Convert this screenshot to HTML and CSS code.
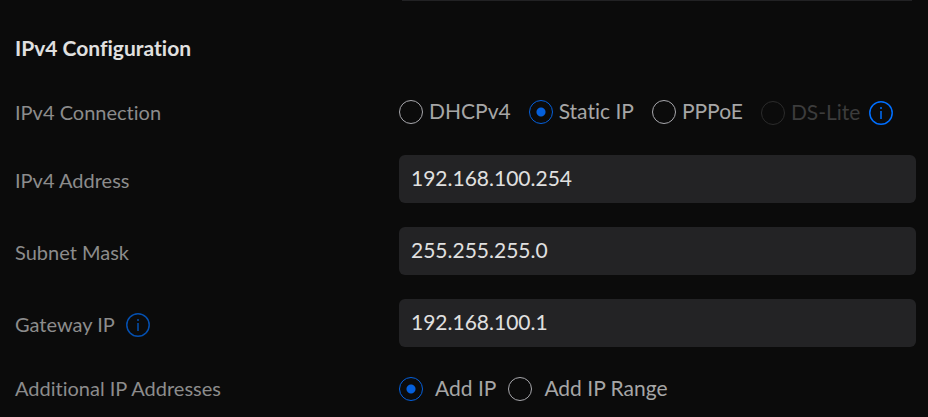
FILE: index.html
```html
<!DOCTYPE html>
<html lang="en">
<head>
    <meta charset="UTF-8">
    <meta name="viewport" content="width=device-width, initial-scale=1.0">
    <title>IPv4 Configuration</title>
    <link rel="stylesheet" href="styles.css">
</head>
<body>
    <form class="settings">
        <div class="previous-field"></div>
        <h2>IPv4 Configuration</h2>

        <div class="row" role="radiogroup" aria-labelledby="connectionLabel">
            <span class="label" id="connectionLabel">IPv4 Connection</span>
            <div class="options">
                <label class="option"><input type="radio" name="connection" value="dhcp"><span>DHCPv4</span></label>
                <label class="option"><input type="radio" name="connection" value="static" checked><span>Static IP</span></label>
                <label class="option"><input type="radio" name="connection" value="pppoe"><span>PPPoE</span></label>
                <div class="option-info">
                    <label class="option disabled"><input type="radio" name="connection" value="dslite" disabled><span>DS-Lite</span></label>
                    <svg class="info" viewBox="0 0 24 24" aria-hidden="true">
                        <circle cx="12" cy="12" r="11.2"/>
                        <path d="M12 10v8"/>
                        <path d="M12 6v2"/>
                    </svg>
                </div>
            </div>
        </div>

        <div class="row field-row">
            <label class="label" for="address">IPv4 Address</label>
            <input class="field" type="text" id="address" name="address" value="192.168.100.254">
        </div>

        <div class="row field-row">
            <label class="label" for="subnet">Subnet Mask</label>
            <input class="field" type="text" id="subnet" name="subnet" value="255.255.255.0">
        </div>

        <div class="row field-row">
            <div class="label">
                <label for="gateway">Gateway IP</label>
                <svg class="info dim" viewBox="0 0 24 24" aria-hidden="true">
                    <circle cx="12" cy="12" r="11.2"/>
                    <path d="M12 10v8"/>
                    <path d="M12 6v2"/>
                </svg>
            </div>
            <input class="field" type="text" id="gateway" name="gateway" value="192.168.100.1">
        </div>

        <div class="row" role="radiogroup" aria-labelledby="additionalLabel">
            <span class="label" id="additionalLabel">Additional IP Addresses</span>
            <div class="options compact">
                <label class="option"><input type="radio" name="additional" value="ip" checked><span>Add IP</span></label>
                <label class="option"><input type="radio" name="additional" value="range"><span>Add IP Range</span></label>
            </div>
        </div>
    </form>
</body>
</html>
```
FILE: styles.css
```css
* {
    box-sizing: border-box;
}
body {
    margin: 0;
    background-color: #0b0b0b;
    color: #8c8c8c;
    font-family: Lato, sans-serif;
    font-size: 20px;
    line-height: 24px;
    font-variant-ligatures: none;
}
.settings {
    display: flex;
    flex-direction: column;
    gap: 24px;
    padding: 0 12px 8px 15px;
}
.previous-field {
    height: 1px;
    margin: 0 4px 0 387px;
    background-color: #222224;
}
h2 {
    margin: 11px 0;
    color: #e0e0e0;
    font-size: 21px;
    font-weight: 700;
    line-height: 24px;
}
.row {
    display: flex;
    align-items: center;
    min-height: 36px;
}
.label {
    display: flex;
    align-items: center;
    gap: 11px;
    flex: 0 0 384px;
    padding-bottom: 2px;
}
.field-row .label {
    padding: 2px 0 0;
}
.field {
    flex: 1;
    min-width: 0;
    height: 48px;
    padding: 0 12px 4px;
    border: none;
    border-radius: 6px;
    outline: none;
    background-color: #232325;
    color: #e0e0e0;
    font-family: inherit;
    font-size: 21px;
}
.options {
    display: flex;
    align-items: center;
    gap: 18px;
    padding-bottom: 2px;
    color: #a6a6a6;
    font-size: 21px;
    white-space: nowrap;
}
.option {
    display: flex;
    align-items: center;
    gap: 6px;
}
.option span {
    padding-bottom: 2px;
}
.option-info {
    display: flex;
    align-items: center;
    gap: 9px;
    padding-top: 2px;
}
.compact {
    gap: 12px;
    padding-bottom: 0;
}
.compact .option {
    gap: 12px;
}
.option input {
    appearance: none;
    width: 24px;
    height: 24px;
    margin: 0;
    border: 1px solid #a8a8ad;
    border-radius: 50%;
}
.option input:checked {
    border-color: #0560dc;
    background: radial-gradient(circle, #0560dc 4px, transparent 5px);
}
.disabled {
    color: #3c3c3c;
}
.disabled input {
    border-color: #2b2b2b;
}
.info {
    width: 24px;
    height: 24px;
    fill: none;
    stroke: #006fff;
    stroke-width: 1.5;
}
.dim {
    margin-top: 2px;
    stroke: #0550b0;
}
```
